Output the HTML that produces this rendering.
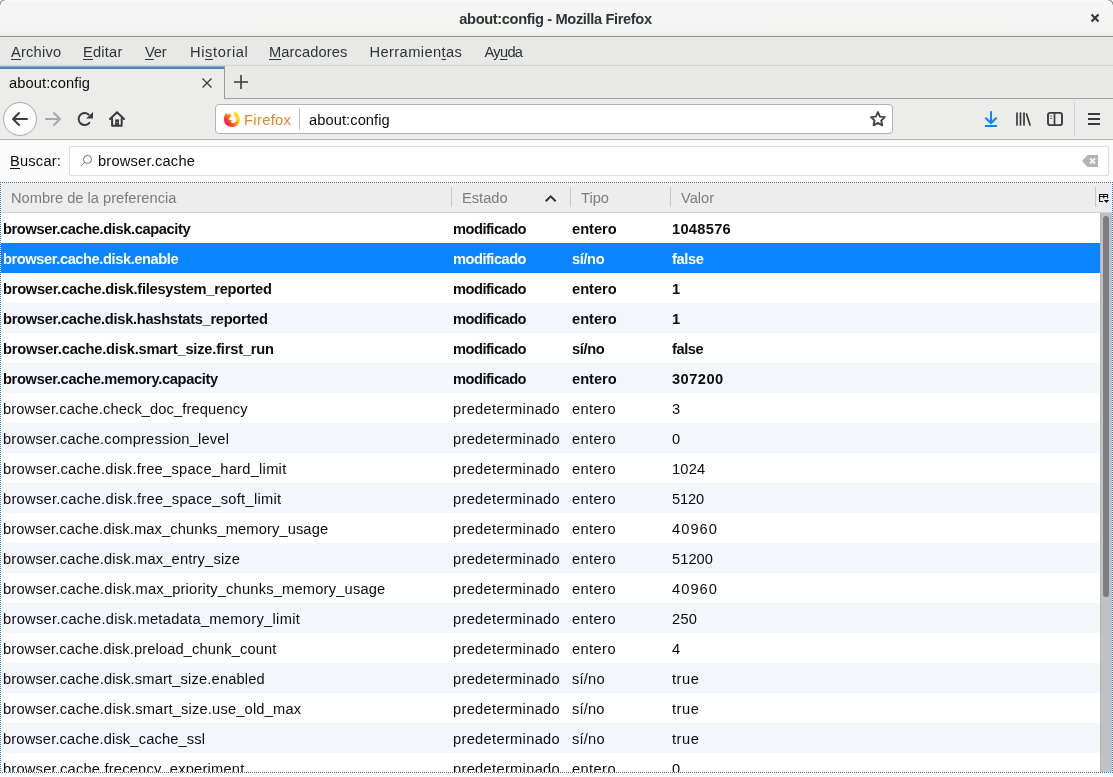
<!DOCTYPE html>
<html lang="es"><head><meta charset="utf-8"><title>about:config - Mozilla Firefox</title>
<style>
html,body{margin:0;padding:0}
body{width:1113px;height:777px;overflow:hidden;position:relative;background:#fbfbfb;font-family:"Liberation Sans",sans-serif;font-size:14.667px;color:#0c0c0d;letter-spacing:.2px}
div,span,svg{position:absolute;white-space:nowrap}
u{text-decoration:underline;text-underline-offset:2px;text-decoration-thickness:1px}
#titlebar{left:0;top:0;width:1113px;height:36px;background:linear-gradient(#fcfcfc 0,#f5f5f5 2px,#f4f4f3 30px,#ecebea 36px);border-bottom:1px solid #939392}
#title{left:0;width:1111px;top:10px;text-align:center;font-weight:700;color:#2e3436;letter-spacing:-.37px;line-height:18px}
#menubar{left:0;top:37px;width:1113px;height:28px;background:#e8e8e7;border-bottom:1px solid #d3d3d2}
#menubar span{top:6px;line-height:18px;color:#2e3436}
#tabbar{left:0;top:66px;width:1113px;height:32px;background:#e9e9e8;border-bottom:1px solid #9b9b9b}
#tab{left:0;top:0;width:224px;height:33px;background:#ececeb;border-right:1px solid #9b9b9b}
#tabline{left:0;top:0;width:224px;height:4px;background:linear-gradient(#86aad2 0,#86aad2 1px,#5b88ba 1px,#5b88ba 2px,#4e7fb5 2px,#4e7fb5 3px,#dcecfb 3px)}
#navbar{left:0;top:99px;width:1113px;height:40px;background:#ececeb;border-bottom:1px solid #b4b4b4}
#urlbar{left:215px;top:5px;width:676px;height:28px;background:#fff;border:1px solid #b2b2b2;border-radius:4px}
#searchrow{left:0;top:140px;width:1113px;height:42px;background:#fbfbfb}
#searchbox{left:69px;top:6px;width:1038px;height:28px;background:#fff;border:1px solid #dcdcdc;border-radius:2px}
#tree{left:0;top:182px;width:1111px;height:589px;border:1px dotted #3473ad;background:#fff;overflow:hidden}
#thead{left:0;top:0;width:1111px;height:29px;background:#ededed;border-bottom:1px solid #d4d4d4;color:#7c7c7c}
#thead span{top:6px;line-height:18px;letter-spacing:0}
#thead i{position:absolute;top:4px;width:1px;height:20px;background:#c8c8c8}
#tbody{left:0;top:30px;width:1099px;height:559px;overflow:hidden}
.row{left:0;width:1099px;height:30px;line-height:30px;background:#fff}
.row.alt{background:#f3f6fa}
.row.sel{background:#0a84ff;color:#fff}
.row.b{font-weight:700;letter-spacing:-.25px}
.row span{top:1px}
.c1{left:2px}.c2{left:452px}.c3{left:571px}.c4{left:671px}
#sbar{left:1099px;top:30px;width:12px;height:559px;background:#c1c1c0;box-shadow:inset 1px 0 0 #b4b4b4}
#thumb{left:3px;top:3px;width:6px;height:381px;border-radius:3px;background:#7d7d7d}
#w{left:0;top:0;width:1113px;height:777px;will-change:transform}
</style></head><body>
<div id="w">
<div id="titlebar"><svg style="left:0;top:0" width="6" height="6" viewBox="0 0 6 6"><path d="M0 0h5L0 5z" fill="#fff"/><path d="M0 4.800A4.800 4.800 0 0 1 4.800 0" stroke="#8c8c8c" stroke-width="1.200" fill="none"/></svg><svg style="left:1107px;top:0" width="6" height="6" viewBox="0 0 6 6"><path d="M6 0H1l5 5z" fill="#fff"/><path d="M6 4.800A4.800 4.800 0 0 0 1.200 0" stroke="#8c8c8c" stroke-width="1.200" fill="none"/></svg><div id="title">about:config - Mozilla Firefox</div>
<svg style="left:1089px;top:12px" width="12" height="12" viewBox="0 0 12 12"><path d="M2.5 2.5l7 7M9.5 2.5l-7 7" stroke="#2e3436" stroke-width="2" fill="none"/></svg>
</div>
<div id="menubar">
<span style="left:11px"><u>A</u>rchivo</span>
<span style="left:83px"><u>E</u>ditar</span>
<span style="left:145px;letter-spacing:-.15px"><u>V</u>er</span>
<span style="left:190px;letter-spacing:.6px">Hi<u>s</u>torial</span>
<span style="left:269px;letter-spacing:.1px"><u>M</u>arcadores</span>
<span style="left:369.500px;letter-spacing:.4px">Herramien<u>t</u>as</span>
<span style="left:484.500px;letter-spacing:-.7px">Ay<u>u</u>da</span>
</div>
<div id="tabbar"><div id="tab"><div id="tabline"></div><span style="left:9px;top:8px;line-height:18px;letter-spacing:.1px">about:config</span>
<svg style="left:201px;top:11px" width="12" height="12" viewBox="0 0 12 12"><path d="M1.5 1.5l9 9M10.5 1.5l-9 9" stroke="#3a3a3a" stroke-width="1.3" fill="none"/></svg></div>
<svg style="left:233px;top:8px" width="16" height="16" viewBox="0 0 16 16"><path d="M8 1v14M1 8h14" stroke="#3b3b3b" stroke-width="1.6" fill="none"/></svg>
</div>
<div id="navbar">
<div style="left:3px;top:3px;width:32px;height:32px;border:1px solid #a9a9a9;border-radius:50%;background:#fcfcfc"></div>
<svg style="left:11px;top:12px" width="18" height="16" viewBox="0 0 18 16"><path d="M16 8H2.500M8 2L2 8l6 6" stroke="#3b3b3b" stroke-width="2" fill="none" stroke-linecap="round" stroke-linejoin="round"/></svg>
<svg style="left:45px;top:12px" width="18" height="16" viewBox="0 0 18 16"><path d="M1 8h13.500M9 2l6 6-6 6" stroke="#a8a8a8" stroke-width="2" fill="none" stroke-linecap="round" stroke-linejoin="round"/></svg>
<svg style="left:77px;top:12px" width="17" height="16" viewBox="0 0 17 16"><path d="M11.600 3.500A6 6 0 1 0 12.300 11.800" stroke="#3b3b3b" stroke-width="2" fill="none" stroke-linecap="round"/><path d="M16 1V7.500H9.200z" fill="#3b3b3b"/></svg>
<svg style="left:109px;top:12px" width="16" height="16" viewBox="0 0 16 16"><path d="M1 8L8 1.200l7 6.800M3.100 7.500V14.700h9.600V7.500" stroke="#3b3b3b" stroke-width="2" fill="none" stroke-linejoin="round" stroke-linecap="round"/><rect x="6.200" y="8.400" width="3.800" height="6.300" fill="#3b3b3b"/><rect x="7.600" y="11" width="1" height="1" fill="#ddd"/></svg>
<div id="urlbar">
<svg style="left:8px;top:6px" width="16" height="16" viewBox="0 0 16 16"><defs><linearGradient id="fx" gradientUnits="userSpaceOnUse" x1="14" y1="3" x2="1" y2="13"><stop offset=".1" stop-color="#ffe02a"/><stop offset=".3" stop-color="#ffbd1a"/><stop offset=".5" stop-color="#ff8a16"/><stop offset=".72" stop-color="#ff4327"/><stop offset=".88" stop-color="#f5264f"/><stop offset="1" stop-color="#d6157e"/></linearGradient></defs><path d="M10.400.2C13.500 1.500 16 4.600 16 8.500 16 12.700 12.500 16 8 16S0 12.700 0 8.600C0 6 .8 3.700 2.200 1.900c.3.900.9 1.400 1.700 1.500.9-.5 1.800-.8 2.600-1.200-.2 1.100.2 2.200 1.300 3.100L6 6.400C5 7.100 4.700 8.200 5.300 9.100l3.400.2-1.800 1.300c.3.900 1.100 1.500 2 1.500 1.800 0 3.300-1.600 3.300-3.700 0-1.600-.9-2.700-1.600-3.700C9.800 3.600 9.600 1.800 10.400.2z" fill="url(#fx)"/></svg>
<span style="left:28px;top:6px;line-height:18px;color:#e0872e;letter-spacing:.35px">Firefox</span>
<div style="left:83px;top:3px;width:1px;height:22px;background:#c6c6c6"></div>
<span style="left:93px;top:6px;line-height:18px;letter-spacing:.08px">about:config</span>
<svg style="left:653px;top:6px" width="18" height="18" viewBox="0 0 18 18"><path d="M8.90 1.10L10.96 5.57L15.84 6.14L12.23 9.48L13.19 14.31L8.90 11.90L4.61 14.31L5.57 9.48L1.96 6.14L6.84 5.57z" stroke="#474747" stroke-width="1.900" fill="none" stroke-linejoin="round"/></svg>
</div>
<svg style="left:983px;top:12px" width="16" height="17" viewBox="0 0 16 17"><path d="M8 1v11M3 7.300l5 5 5-5" stroke="#0a84ff" stroke-width="2" fill="none" stroke-linecap="round" stroke-linejoin="round"/><path d="M2 15h12" stroke="#0a84ff" stroke-width="2"/></svg>
<svg style="left:1015px;top:12px" width="16" height="16" viewBox="0 0 16 16"><path d="M2 2v12M5.500 2v12M9 2v12M11.500 3l3.500 11" stroke="#3b3b3b" stroke-width="1.700" fill="none" stroke-linecap="round"/></svg>
<svg style="left:1047px;top:12px" width="16" height="16" viewBox="0 0 16 16"><rect x="1" y="1.900" width="14" height="12.200" rx="2.200" stroke="#3b3b3b" stroke-width="1.900" fill="none"/><path d="M7.500 2v12" stroke="#3b3b3b" stroke-width="1.700"/><path d="M3.200 5h2M3.200 7.500h2" stroke="#3b3b3b" stroke-width=".8"/></svg>
<div style="left:1074px;top:3px;width:1px;height:34px;background:#d2d2d2"></div>
<svg style="left:1086px;top:12px" width="16" height="16" viewBox="0 0 16 16"><path d="M2 3h12M2 8h12M2 13h12" stroke="#3b3b3b" stroke-width="2" fill="none"/></svg>
</div>
<div id="searchrow">
<span style="left:10px;top:12px;line-height:18px"><u>B</u>uscar:</span>
<div id="searchbox">
<svg style="left:10px;top:7px" width="13" height="13" viewBox="0 0 13 13"><circle cx="7.500" cy="5.400" r="4" stroke="#6f6f6f" stroke-width="1" fill="none"/><path d="M4.700 8.300L1 12" stroke="#7a7a7a" stroke-width="1"/></svg>
<span style="left:28px;top:5px;line-height:18px">browser.cache</span>
<svg style="left:1012px;top:8px" width="16" height="12" viewBox="0 0 16 12"><path d="M5.500 0H16v12H5.500L0 6z" fill="#b4b4b2"/><path d="M8 3.500l5 5M13 3.500l-5 5" stroke="#f4f4f4" stroke-width="2"/></svg>
</div>
</div>
<div id="tree">
<div id="thead">
<span style="left:10px">Nombre de la preferencia</span><i style="left:450px"></i>
<span style="left:461px">Estado</span>
<svg style="left:543px;top:10px" width="13" height="10" viewBox="0 0 13 10"><path d="M1.700 8.300l5-5 5 5" stroke="#333" stroke-width="2" fill="none"/></svg>
<i style="left:569px"></i>
<span style="left:580px">Tipo</span><i style="left:669px"></i>
<span style="left:680px">Valor</span><i style="left:1094px"></i>
<svg style="left:1097px;top:10px" width="12" height="11" viewBox="0 0 12 11"><path d="M1 1h9v1H1zM1 3h9v.9H1zM1 1h1.100v8H1zM5.200 1h1.100v4.500H5.200zM9 1h1.100v4.500H9zM1 8h4v1H1zM5.800 7h5.400l-2.700 3.100z" fill="#111"/></svg>
</div>
<div id="tbody">
<div class="row b" style="top:0px"><span class="c1" style="letter-spacing:-0.401px">browser.cache.disk.capacity</span><span class="c2" style="letter-spacing:-0.513px">modificado</span><span class="c3" style="letter-spacing:-0.006px">entero</span><span class="c4" style="letter-spacing:0.284px">1048576</span></div>
<div class="row b sel" style="top:30px"><span class="c1" style="letter-spacing:-0.422px">browser.cache.disk.enable</span><span class="c2" style="letter-spacing:-0.511px">modificado</span><span class="c3" style="letter-spacing:-0.401px">sí/no</span><span class="c4" style="letter-spacing:-0.400px">false</span></div>
<div class="row b" style="top:60px"><span class="c1" style="letter-spacing:-0.263px">browser.cache.disk.filesystem_reported</span><span class="c2" style="letter-spacing:-0.513px">modificado</span><span class="c3" style="letter-spacing:-0.006px">entero</span><span class="c4" style="letter-spacing:-0.250px">1</span></div>
<div class="row b alt" style="top:90px"><span class="c1" style="letter-spacing:-0.291px">browser.cache.disk.hashstats_reported</span><span class="c2" style="letter-spacing:-0.513px">modificado</span><span class="c3" style="letter-spacing:-0.006px">entero</span><span class="c4" style="letter-spacing:-0.250px">1</span></div>
<div class="row b" style="top:120px"><span class="c1" style="letter-spacing:-0.199px">browser.cache.disk.smart_size.first_run</span><span class="c2" style="letter-spacing:-0.513px">modificado</span><span class="c3" style="letter-spacing:-0.386px">sí/no</span><span class="c4" style="letter-spacing:-0.436px">false</span></div>
<div class="row b alt" style="top:150px"><span class="c1" style="letter-spacing:-0.335px">browser.cache.memory.capacity</span><span class="c2" style="letter-spacing:-0.513px">modificado</span><span class="c3" style="letter-spacing:-0.006px">entero</span><span class="c4" style="letter-spacing:0.463px">307200</span></div>
<div class="row" style="top:180px"><span class="c1" style="letter-spacing:0.105px">browser.cache.check_doc_frequency</span><span class="c2" style="letter-spacing:0.312px">predeterminado</span><span class="c3" style="letter-spacing:0.395px">entero</span><span class="c4" style="letter-spacing:0.200px">3</span></div>
<div class="row alt" style="top:210px"><span class="c1" style="letter-spacing:0.199px">browser.cache.compression_level</span><span class="c2" style="letter-spacing:0.312px">predeterminado</span><span class="c3" style="letter-spacing:0.397px">entero</span><span class="c4" style="letter-spacing:0.200px">0</span></div>
<div class="row" style="top:240px"><span class="c1" style="letter-spacing:0.264px">browser.cache.disk.free_space_hard_limit</span><span class="c2" style="letter-spacing:0.312px">predeterminado</span><span class="c3" style="letter-spacing:0.395px">entero</span><span class="c4" style="letter-spacing:0.195px">1024</span></div>
<div class="row alt" style="top:270px"><span class="c1" style="letter-spacing:0.278px">browser.cache.disk.free_space_soft_limit</span><span class="c2" style="letter-spacing:0.312px">predeterminado</span><span class="c3" style="letter-spacing:0.397px">entero</span><span class="c4" style="letter-spacing:-0.164px">5120</span></div>
<div class="row" style="top:300px"><span class="c1" style="letter-spacing:0.120px">browser.cache.disk.max_chunks_memory_usage</span><span class="c2" style="letter-spacing:0.312px">predeterminado</span><span class="c3" style="letter-spacing:0.395px">entero</span><span class="c4" style="letter-spacing:1.052px">40960</span></div>
<div class="row alt" style="top:330px"><span class="c1" style="letter-spacing:0.176px">browser.cache.disk.max_entry_size</span><span class="c2" style="letter-spacing:0.312px">predeterminado</span><span class="c3" style="letter-spacing:0.397px">entero</span><span class="c4" style="letter-spacing:0.052px">51200</span></div>
<div class="row" style="top:360px"><span class="c1" style="letter-spacing:0.200px">browser.cache.disk.max_priority_chunks_memory_usage</span><span class="c2" style="letter-spacing:0.312px">predeterminado</span><span class="c3" style="letter-spacing:0.395px">entero</span><span class="c4" style="letter-spacing:1.052px">40960</span></div>
<div class="row alt" style="top:390px"><span class="c1" style="letter-spacing:0.300px">browser.cache.disk.metadata_memory_limit</span><span class="c2" style="letter-spacing:0.312px">predeterminado</span><span class="c3" style="letter-spacing:0.397px">entero</span><span class="c4" style="letter-spacing:0.265px">250</span></div>
<div class="row" style="top:420px"><span class="c1" style="letter-spacing:0.120px">browser.cache.disk.preload_chunk_count</span><span class="c2" style="letter-spacing:0.312px">predeterminado</span><span class="c3" style="letter-spacing:0.395px">entero</span><span class="c4" style="letter-spacing:0.200px">4</span></div>
<div class="row alt" style="top:450px"><span class="c1" style="letter-spacing:0.165px">browser.cache.disk.smart_size.enabled</span><span class="c2" style="letter-spacing:0.312px">predeterminado</span><span class="c3" style="letter-spacing:0.189px">sí/no</span><span class="c4" style="letter-spacing:0.515px">true</span></div>
<div class="row" style="top:480px"><span class="c1" style="letter-spacing:0.181px">browser.cache.disk.smart_size.use_old_max</span><span class="c2" style="letter-spacing:0.312px">predeterminado</span><span class="c3" style="letter-spacing:0.187px">sí/no</span><span class="c4" style="letter-spacing:0.516px">true</span></div>
<div class="row alt" style="top:510px"><span class="c1" style="letter-spacing:0.151px">browser.cache.disk_cache_ssl</span><span class="c2" style="letter-spacing:0.312px">predeterminado</span><span class="c3" style="letter-spacing:0.189px">sí/no</span><span class="c4" style="letter-spacing:0.515px">true</span></div>
<div class="row" style="top:540px"><span class="c1" style="letter-spacing:0.206px">browser.cache.frecency_experiment</span><span class="c2" style="letter-spacing:0.312px">predeterminado</span><span class="c3" style="letter-spacing:0.395px">entero</span><span class="c4" style="letter-spacing:0.200px">0</span></div>
</div>
<div id="sbar"><div id="thumb"></div></div>
</div>
</div>
</body></html>
